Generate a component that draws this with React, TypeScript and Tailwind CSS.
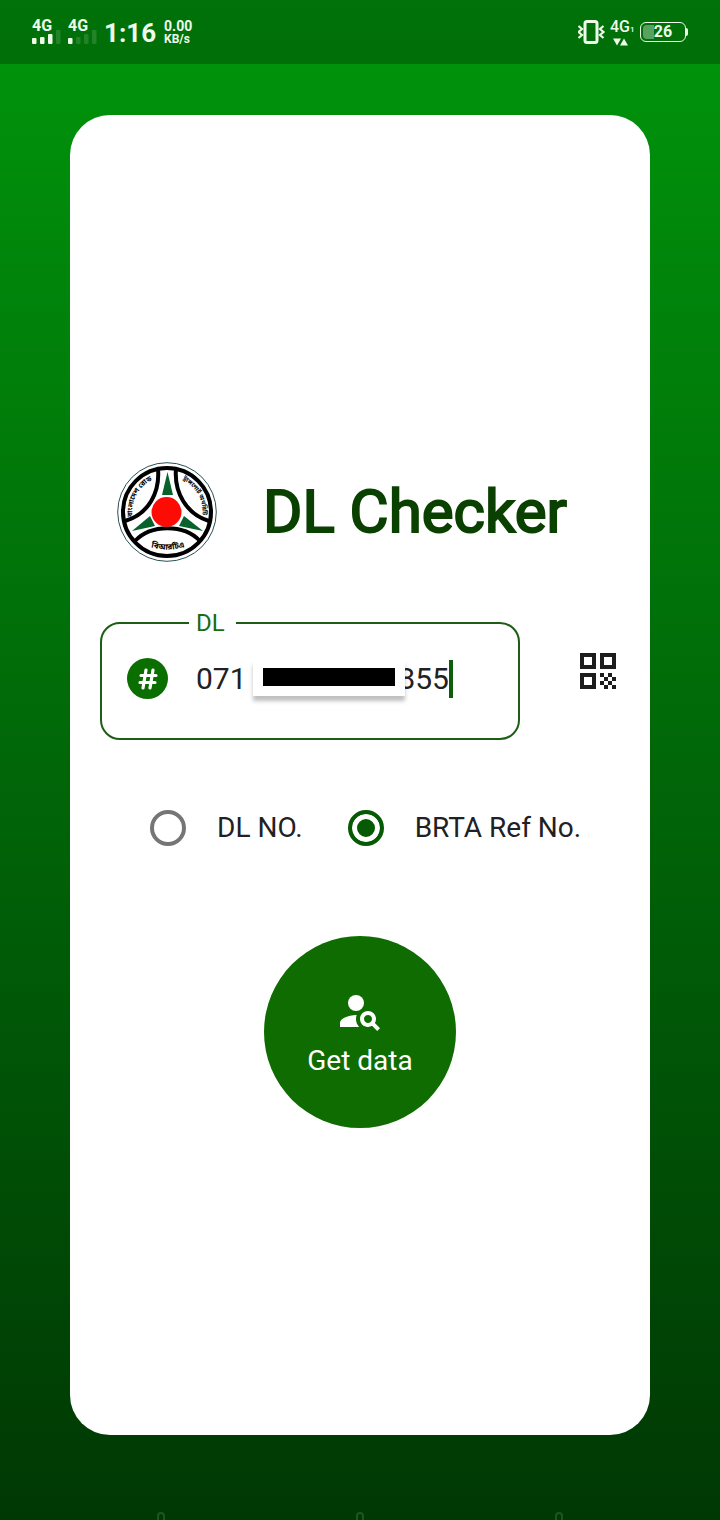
import { useState } from "react"
import { MdPersonSearch, MdQrCode } from "react-icons/md"

function SignalBars({ active }: { active: number }) {
  const heights = [6, 7, 10, 15]
  return (
    <div className="flex h-[46px] flex-col justify-end">
      <span className="text-base leading-4 font-bold">4G</span>
      <svg className="-mt-1 h-4 w-8" viewBox="0 0 32 16" fill="currentColor" aria-hidden="true">
        {heights.map((h, i) => (
          <rect key={h} x={i * 8} y={14 - h} width={4.5} height={h} rx={1} opacity={i < active ? 1 : 0.14} />
        ))}
      </svg>
    </div>
  )
}

function StatusBar() {
  return (
    <header className="flex h-16 items-start justify-between bg-black/24 px-8 text-[#effbea]">
      <div className="flex">
        <div className="flex gap-1">
          <SignalBars active={3} />
          <SignalBars active={1} />
        </div>
        <span className="ml-1 pt-[17px] text-[26px] leading-8 font-bold">1:16</span>
        <div className="ml-2 flex flex-col pt-5 font-bold">
          <span className="text-sm leading-[13px]">0.00</span>
          <span className="text-xs leading-[13px]">KB/s</span>
        </div>
      </div>
      <div className="flex h-16 items-center gap-1">
        <svg className="h-7 w-7" viewBox="0 0 28 28" fill="none" stroke="currentColor" aria-hidden="true">
          <rect x="7" y="3.500" width="12" height="21" rx="2" strokeWidth="3" />
          <path d="M0.500 8l3.500 3-3.500 3 3.500 3-3.500 3M25.500 8l-3.500 3 3.500 3-3.500 3 3.500 3" strokeWidth="2.200" />
        </svg>
        <div className="flex w-[26px] flex-col">
          <span className="text-base leading-4 font-medium whitespace-nowrap">
            4G<span className="text-[8px]">1</span>
          </span>
          <svg className="h-2 w-[22px]" viewBox="0 0 22 8" fill="currentColor" aria-hidden="true">
            <path d="M3 0.500h8l-4 7zM10 7.500h8l-4-7z" />
          </svg>
        </div>
        <div className="flex items-center">
          <div className="relative h-5 w-[46px] overflow-hidden rounded-md border border-current text-center text-base leading-[18px] font-bold">
            <div className="absolute inset-y-[2px] left-[2px] w-[11px] rounded-l bg-white/35" />
            <span className="relative">26</span>
          </div>
          <div className="h-2 w-[2px] rounded-r bg-current" />
        </div>
      </div>
    </header>
  )
}

function Logo() {
  return (
    <svg className="size-[100px]" viewBox="0 0 100 100" role="img" aria-label="BRTA">
      <defs>
        <path id="seal-left" d="M16 57A36 36 0 0 1 37 17" />
        <path id="seal-right" d="M62 16A37 37 0 0 1 85 57" />
        <path id="seal-bottom" d="M31 84Q50 91 71 84" />
      </defs>
      <circle cx="50" cy="50" r="49.3" fill="#fff" stroke="#123d3f" strokeWidth="0.9" />
      <g fill="none" stroke="#000" strokeWidth="4">
        <circle cx="50" cy="50" r="44" />
        <path d="M41 7C43 30 32 52 8 59" />
        <path d="M59 7C57 30 69 52 92 59" />
        <path d="M18 79C34 62 67 62 83 79" />
      </g>
      <g fill="#07622c">
        <path d="M50.500 10L45 33h11z" />
        <path d="M15 69L33 54l5 10z" />
        <path d="M86 69L67 54l-5 10z" />
      </g>
      <circle cx="49.500" cy="50" r="15" fill="#fe0b06" />
      <g className="font-[Noto_Sans_Bengali,sans-serif] font-bold" fill="#000" textAnchor="middle">
        <text fontSize="7">
          <textPath href="#seal-left" startOffset="50%">বাংলাদেশ রোড</textPath>
        </text>
        <text fontSize="6">
          <textPath href="#seal-right" startOffset="50%">ট্রান্সপোর্ট অথরিটি</textPath>
        </text>
        <text fontSize="8">
          <textPath href="#seal-bottom" startOffset="50%">বিআরটিএ</textPath>
        </text>
      </g>
    </svg>
  )
}

function NumberField() {
  // the figure space keeps the width of a digit
  const [value, setValue] = useState("071\u200700000000855")
  return (
    <fieldset className="h-[138px] min-w-0 flex-1 rounded-[20px] border-2 border-[#1b5e14] pl-[25px]">
      <legend className="ml-[62px] pr-[11px] pl-[7px] text-2xl leading-[42px] text-[#1b6a14]">
        <label htmlFor="dl">DL</label>
      </legend>
      <div className="flex items-center pt-[14px]">
        <span className="flex size-[41px] items-center justify-center rounded-full bg-[#0a6e00] text-white">
          <svg className="size-6" viewBox="0 0 24 24" fill="none" stroke="currentColor" strokeWidth="3.200" strokeLinecap="round" aria-hidden="true">
            <path d="M10 3L7 21M17 3l-3 18M5 8.500h15M4 15.500h15" />
          </svg>
        </span>
        <div className="relative ml-7 flex items-center">
          <input
            id="dl"
            value={value}
            onChange={(e) => setValue(e.target.value)}
            className="field-sizing-content text-[30px] leading-9 text-[#202124] outline-none"
          />
          <span className="h-[38px] w-1 bg-[#0f5c0c]" />
          <div className="absolute top-0 left-[57px] flex h-9 w-[152px] items-center bg-white px-[10px] pb-[2px] shadow-[0_5px_4px_rgba(0,0,0,0.25)]">
            <div className="h-[18px] w-full bg-black" />
          </div>
        </div>
      </div>
    </fieldset>
  )
}

function RadioOption({ label, value, defaultChecked }: { label: string; value: string; defaultChecked?: boolean }) {
  return (
    <label className="flex items-center gap-[31px] text-[28px] leading-9 whitespace-nowrap text-[#202124]">
      <input
        type="radio"
        name="kind"
        value={value}
        defaultChecked={defaultChecked}
        className="size-9 appearance-none rounded-full border-4 border-[#757575] bg-white checked:border-[#065a03] checked:bg-[#065a03] checked:shadow-[inset_0_0_0_5px_#fff]"
      />
      {label}
    </label>
  )
}

export default function App() {
  return (
    <div className="flex min-h-screen flex-col bg-linear-to-b/srgb from-[#00960c] to-[#003804] font-[Roboto,sans-serif]">
      <StatusBar />
      <main className="mx-[70px] mt-[51px] flex flex-1 flex-col justify-center rounded-[40px] bg-white pt-10">
        <div className="flex items-center gap-[46px] pl-[47px]">
          <Logo />
          <h1 className="text-[60px] leading-[72px] whitespace-nowrap text-[#0a4000] [-webkit-text-stroke:2px_#0a4000]">
            DL Checker
          </h1>
        </div>
        <div className="mt-10 flex items-center gap-[54px] pr-7 pl-[30px]">
          <NumberField />
          <button type="button" aria-label="Scan code" className="text-[#1d1d1d]">
            <MdQrCode className="size-12" />
          </button>
        </div>
        <div className="mt-[70px] flex gap-[45px] pl-20">
          <RadioOption label="DL NO." value="dl" />
          <RadioOption label="BRTA Ref No." value="ref" defaultChecked />
        </div>
        <button
          type="button"
          className="mt-[90px] flex size-48 flex-col items-center justify-center gap-[10px] self-center rounded-full bg-[#0f6c00] text-[28px] leading-8 text-white"
        >
          <MdPersonSearch className="size-12" />
          Get data
        </button>
      </main>
      <footer className="flex h-[85px] items-end justify-around overflow-hidden px-[61px]">
        <span className="-mb-1 h-3 w-2 rounded-full border-2 border-[#1c5720]" />
        <span className="-mb-1 h-3 w-2 rounded-full border-2 border-[#1c5720]" />
        <span className="-mb-1 h-3 w-2 rounded-full border-2 border-[#1c5720]" />
      </footer>
    </div>
  )
}
